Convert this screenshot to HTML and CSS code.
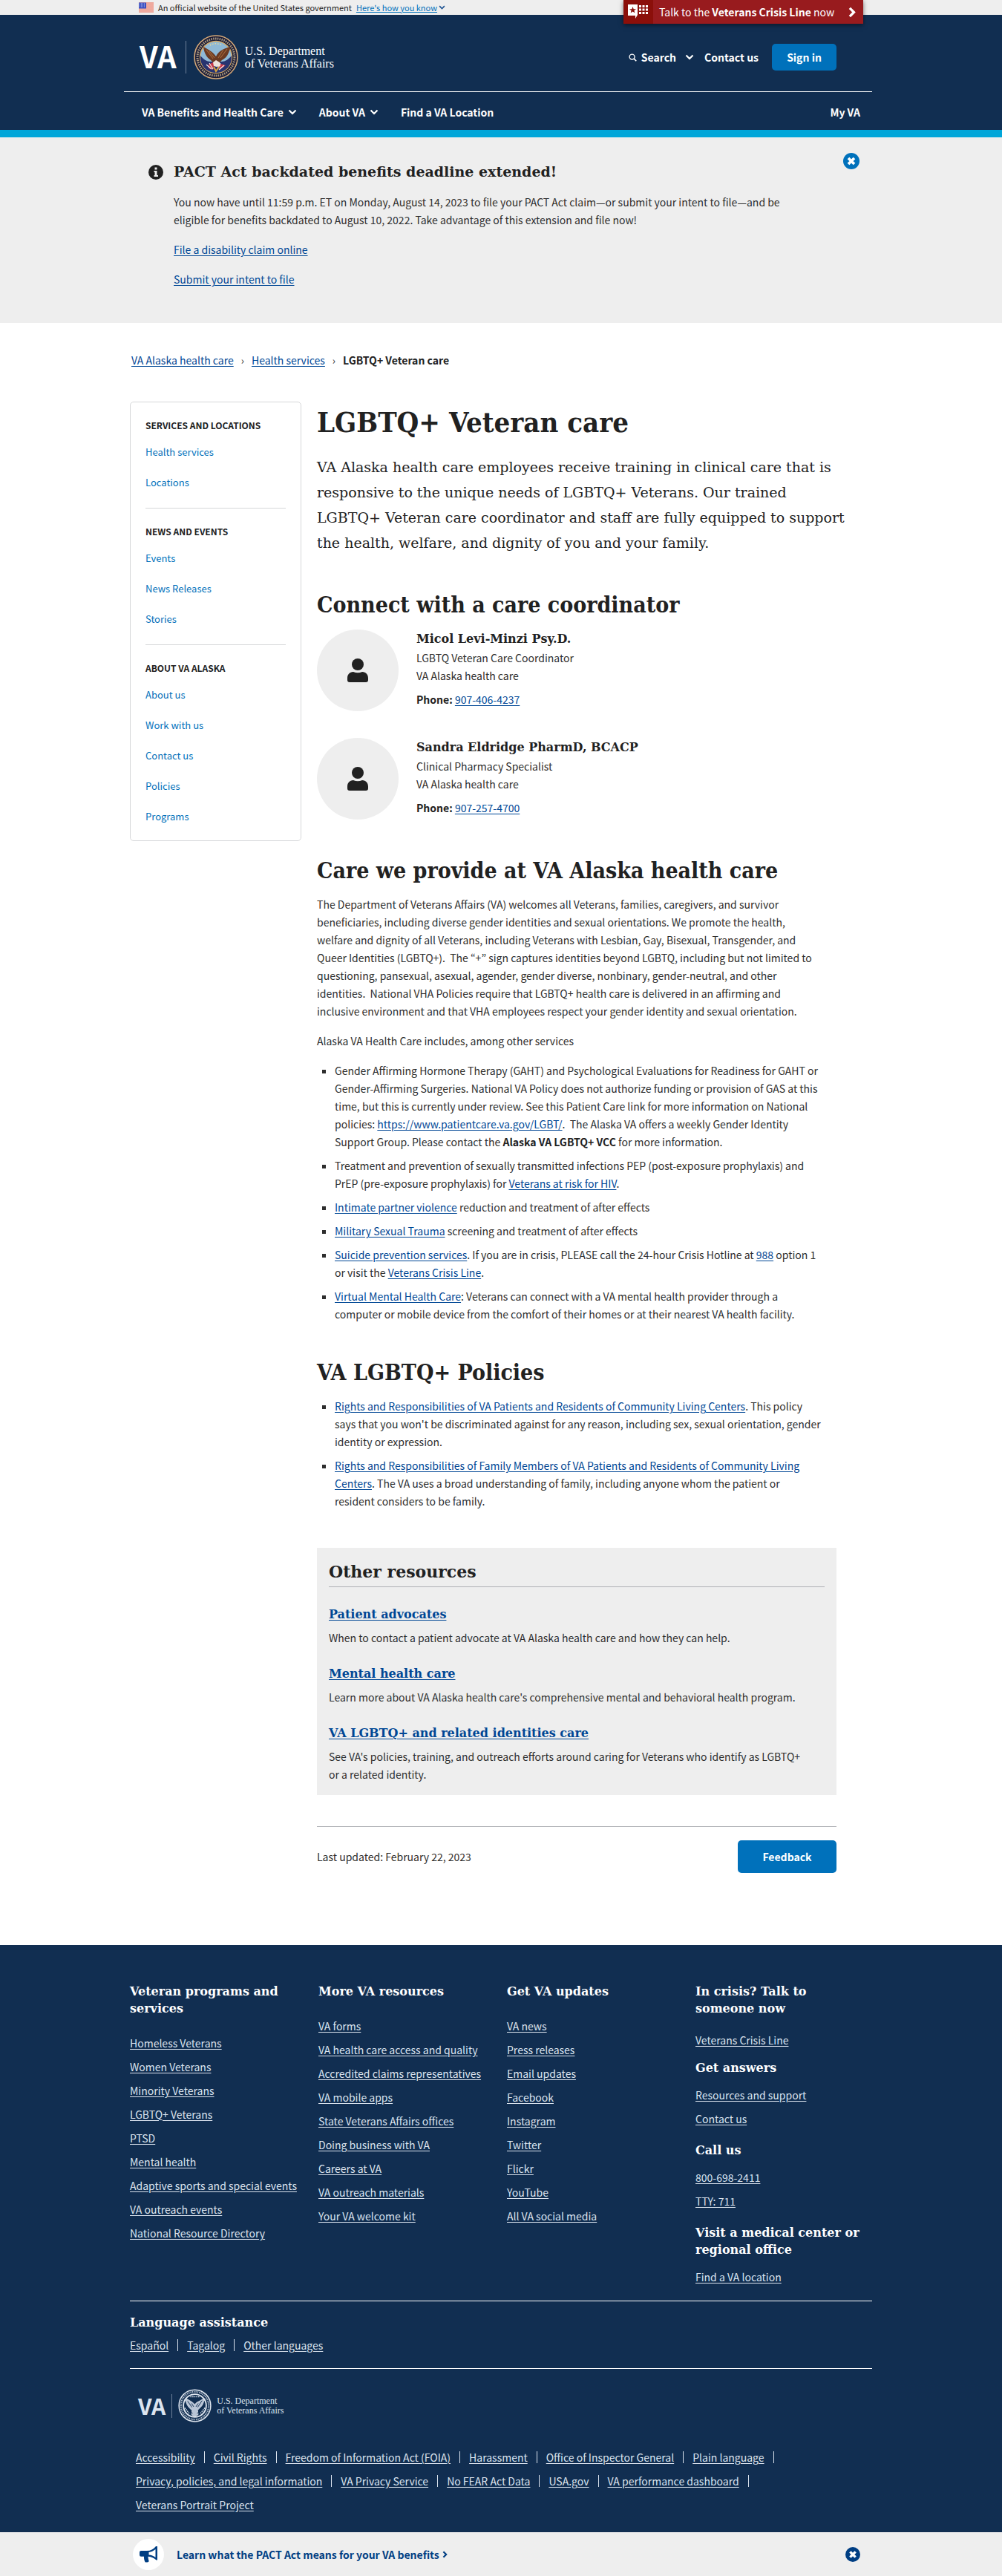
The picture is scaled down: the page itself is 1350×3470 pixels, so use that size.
FILE: index.html
```html
<!DOCTYPE html>
<html lang="en">
<head>
<meta charset="utf-8">
<meta name="viewport" content="width=device-width, initial-scale=1">
<title>LGBTQ+ Veteran care | VA Alaska health care</title>
<link rel="stylesheet" href="styles.css">
</head>
<body>
<svg class="sprite" aria-hidden="true">
  <symbol id="chevron" viewBox="0 0 12 8"><path d="M1.5 1.5 6 6l4.500-4.500" fill="none" stroke="currentColor" stroke-width="2.200"/></symbol>
  <symbol id="chevron-right" viewBox="0 0 8 12"><path d="M1.500 1.500 6 6l-4.500 4.500" fill="none" stroke="currentColor" stroke-width="2.600"/></symbol>
  <symbol id="close" viewBox="0 0 22 22"><circle cx="11" cy="11" r="11" fill="currentColor"/><path d="m7 7 8 8m0-8-8 8" stroke="#fff" stroke-width="3.800"/></symbol>
  <symbol id="person" viewBox="0 0 28 32"><circle cx="14" cy="8" r="8" fill="currentColor"/><path d="M8 18c2 .8 4 1.200 6 1.200s4-.4 6-1.200c5 0 8 3.600 8 8.400V29a3 3 0 0 1-3 3H3a3 3 0 0 1-3-3v-2.600C0 21.600 3 18 8 18z" fill="currentColor"/></symbol>
</svg>

<div class="gov">
  <div class="wrap gov-inner">
    <svg class="flag" viewBox="0 0 20 13" aria-hidden="true"><path fill="#fff" d="M0 0h20v13H0z"/><path stroke="#e0543c" d="M0 .5h20M0 2.500h20M0 4.500h20M0 6.500h20M0 8.500h20M0 10.500h20M0 12.500h20"/><path fill="#3a4ec0" d="M0 0h10v8H0z"/><path stroke="#b9c3f2" stroke-dasharray="1 1" d="M1 1.500h8M1 3.500h8M1 5.500h8"/></svg>
    <span>An official website of the United States government</span>
    <button class="gov-link" type="button"><span>Here's how you know</span><svg class="chev" aria-hidden="true"><use href="#chevron"/></svg></button>
  </div>
  <a class="crisis" href="#">
    <span class="crisis-icon"><svg viewBox="0 0 28 20" aria-hidden="true"><path fill="#fff" d="M0 0h13v14l-3 5v-4H0z"/><path fill="#8b0f0a" d="m6.500 3 1.200 3.200h3.300L8.400 8.200l1 3.300-2.900-2-2.900 2 1-3.300L2 6.200h3.300z"/><path stroke="#fff" stroke-width="3" stroke-dasharray="3 1.500" d="M15 2.500h12.500M15 7h12.500M15 11.500h12.500"/></svg></span>
    <span class="crisis-text">Talk to the <b>Veterans Crisis Line</b> now</span>
    <svg class="crisis-arrow" aria-hidden="true"><use href="#chevron-right"/></svg>
  </a>
</div>

<header class="header">
  <div class="wrap">
    <div class="brand-row">
      <a class="brand" href="#" aria-label="VA home">
        <span class="va">VA</span>
        <svg class="seal" viewBox="0 0 60 60" aria-hidden="true">
          <circle cx="30" cy="30" r="29" fill="#1a1c38" stroke="#d6a978" stroke-width="1.600"/>
          <circle cx="30" cy="30" r="25" fill="none" stroke="#a8987f" stroke-width="3" stroke-dasharray="1.600 1.300"/>
          <circle cx="30" cy="30" r="21.500" fill="#8fb9d6" stroke="#d6a964" stroke-width="1.400"/>
          <path d="M9 28c4 5 9 8 13 8h16c4 0 9-3 13-8 1 13-8 23-21 23S8 41 9 28z" fill="#273470"/>
          <path d="m20 40 8-4-2 11-6-2zM33 38l10 3-8 6z" fill="#c8384a"/>
          <path d="m17 40 7 6M21 38l5 8m10-8-4 8m9-5-7 6" stroke="#f0e8e6" stroke-width="1.200"/>
          <path d="M13 16c4 2 7 4 10 6 3 2 5 4 7 7 2-4 4-6 7-8 3-2 7-4 13-5-1 3-2 5-3 8-2 5-5 8-9 10l-4 4h-7l-4-4c-6-4-9-10-10-18z" fill="#6b3a22"/>
          <path d="m17 20 9 12M21 22l7 9m17-12-9 12m4-11-7 11" stroke="#a4683b" stroke-width="1.200"/>
          <path d="m26 37 4-3 5 3 1 5-5 1-4-1z" fill="#eee3dc"/>
          <path d="m27 43 3 6 4-6" stroke="#dba43d" stroke-width="2" fill="none"/>
          <path d="M22 14c5-3 11-3 16 0" stroke="#e8d99a" stroke-width="1.500" stroke-dasharray="1.500 2" fill="none"/>
        </svg>
        <span class="dept">U.S. Department<br>of Veterans Affairs</span>
      </a>
      <div class="tools">
        <button class="tool search" type="button"><svg class="glass" viewBox="0 0 12 12" aria-hidden="true"><circle cx="5" cy="5" r="3.800" fill="none" stroke="#fff" stroke-width="1.500"/><path d="m7.800 7.800 3.400 3.400" stroke="#fff" stroke-width="1.800"/></svg>Search<svg class="chev chev-search" aria-hidden="true"><use href="#chevron"/></svg></button>
        <a class="tool" href="#">Contact us</a>
        <button class="btn signin" type="button">Sign in</button>
      </div>
    </div>
    <nav class="nav" aria-label="Primary">
      <button class="tool" type="button">VA Benefits and Health Care<svg class="chev" aria-hidden="true"><use href="#chevron"/></svg></button>
      <button class="tool" type="button">About VA<svg class="chev" aria-hidden="true"><use href="#chevron"/></svg></button>
      <a class="tool" href="#">Find a VA Location</a>
      <a class="tool myva" href="#">My VA</a>
    </nav>
  </div>
</header>

<section class="alert">
  <div class="wrap alert-in">
    <svg class="info" viewBox="0 0 20 20" aria-hidden="true"><circle cx="10" cy="10" r="10" fill="#212121"/><path fill="#eee" d="M8.500 3.500h3v3h-3zM7.500 8h4v6H13v2H7.500v-2h1v-4h-1z"/></svg>
    <div class="alert-body">
      <h2>PACT Act backdated benefits deadline extended!</h2>
      <p>You now have until 11:59 p.m. ET on Monday, August 14, 2023 to file your PACT Act claim—or submit your intent to file—and be eligible for benefits backdated to August 10, 2022. Take advantage of this extension and file now!</p>
      <p><a href="#">File a disability claim online</a></p>
      <p><a href="#">Submit your intent to file</a></p>
    </div>
    <button class="close" type="button" aria-label="Close notification"><svg aria-hidden="true"><use href="#close"/></svg></button>
  </div>
</section>

<div class="wrap">
  <nav class="crumbs" aria-label="Breadcrumb">
    <a href="#">VA Alaska health care</a><span class="sep">›</span><a href="#">Health services</a><span class="sep">›</span><b>LGBTQ+ Veteran care</b>
  </nav>
  <div class="layout">
    <nav class="side" aria-label="Section">
      <section><h2>Services and locations</h2><ul><li><a href="#">Health services</a></li><li><a href="#">Locations</a></li></ul></section>
      <section><h2>News and events</h2><ul><li><a href="#">Events</a></li><li><a href="#">News Releases</a></li><li><a href="#">Stories</a></li></ul></section>
      <section><h2>About VA Alaska</h2><ul><li><a href="#">About us</a></li><li><a href="#">Work with us</a></li><li><a href="#">Contact us</a></li><li><a href="#">Policies</a></li><li><a href="#">Programs</a></li></ul></section>
    </nav>
    <main class="article">
      <h1>LGBTQ+ Veteran care</h1>
      <p class="intro">VA Alaska health care employees receive training in clinical care that is responsive to the unique needs of LGBTQ+ Veterans. Our trained<br>LGBTQ+ Veteran care coordinator and staff are fully equipped to support the health, welfare, and dignity of you and your family.</p>

      <h2>Connect with a care coordinator</h2>
      <div class="people">
        <div class="person">
          <span class="avatar"><svg aria-hidden="true"><use href="#person"/></svg></span>
          <div><h3>Micol Levi-Minzi Psy.D.</h3><p>LGBTQ Veteran Care Coordinator</p><p>VA Alaska health care</p><p class="phone"><b>Phone:</b> <a href="#">907-406-4237</a></p></div>
        </div>
        <div class="person">
          <span class="avatar"><svg aria-hidden="true"><use href="#person"/></svg></span>
          <div><h3>Sandra Eldridge PharmD, BCACP</h3><p>Clinical Pharmacy Specialist</p><p>VA Alaska health care</p><p class="phone"><b>Phone:</b> <a href="#">907-257-4700</a></p></div>
        </div>
      </div>

      <h2>Care we provide at VA Alaska health care</h2>
      <div class="copy">
        <p>The Department of Veterans Affairs (VA) welcomes all Veterans, families, caregivers, and survivor beneficiaries, including diverse gender identities and sexual orientations. We promote the health,<br>welfare and dignity of all Veterans, including Veterans with Lesbian, Gay, Bisexual, Transgender, and Queer Identities (LGBTQ+).&nbsp; The “+” sign captures identities beyond LGBTQ, including but not limited to questioning, pansexual, asexual, agender, gender diverse, nonbinary, gender-neutral, and other identities.&nbsp; National VHA Policies require that LGBTQ+ health care is delivered in an affirming and inclusive environment and that VHA employees respect your gender identity and sexual orientation.</p>
        <p>Alaska VA Health Care includes, among other services</p>
        <ul>
          <li>Gender Affirming Hormone Therapy (GAHT) and Psychological Evaluations for Readiness for GAHT or Gender-Affirming Surgeries. National VA Policy does not authorize funding or provision of GAS at this time, but this is currently under review. See this Patient Care link for more information on National policies: <a href="#">https://www.patientcare.va.gov/LGBT/</a>.&nbsp; The Alaska VA offers a weekly Gender Identity Support Group. Please contact the <b>Alaska VA LGBTQ+ VCC</b> for more information.</li>
          <li>Treatment and prevention of sexually transmitted infections PEP (post-exposure prophylaxis) and PrEP (pre-exposure prophylaxis) for <a href="#">Veterans at risk for HIV</a>.</li>
          <li><a href="#">Intimate partner violence</a> reduction and treatment of after effects</li>
          <li><a href="#">Military Sexual Trauma</a> screening and treatment of after effects</li>
          <li><a href="#">Suicide prevention services</a>. If you are in crisis, PLEASE call the 24-hour Crisis Hotline at <a href="#">988</a> option 1 or visit the <a href="#">Veterans Crisis Line</a>.</li>
          <li><a href="#">Virtual Mental Health Care</a>: Veterans can connect with a VA mental health provider through a computer or mobile device from the comfort of their homes or at their nearest VA health facility.</li>
        </ul>
      </div>

      <h2>VA LGBTQ+ Policies</h2>
      <div class="copy">
        <ul>
          <li><a href="#">Rights and Responsibilities of VA Patients and Residents of Community Living Centers</a>. This policy<br>says that you won't be discriminated against for any reason, including sex, sexual orientation, gender identity or expression.</li>
          <li><a href="#">Rights and Responsibilities of Family Members of VA Patients and Residents of Community Living Centers</a>. The VA uses a broad understanding of family, including anyone whom the patient or<br>resident considers to be family.</li>
        </ul>
      </div>

      <section class="resources">
        <h2>Other resources</h2>
        <h3><a href="#">Patient advocates</a></h3>
        <p>When to contact a patient advocate at VA Alaska health care and how they can help.</p>
        <h3><a href="#">Mental health care</a></h3>
        <p>Learn more about VA Alaska health care's comprehensive mental and behavioral health program.</p>
        <h3><a href="#">VA LGBTQ+ and related identities care</a></h3>
        <p>See VA's policies, training, and outreach efforts around caring for Veterans who identify as LGBTQ+ or a related identity.</p>
      </section>

      <div class="updated">
        <span>Last updated: February 22, 2023</span>
        <button class="btn feedback" type="button">Feedback</button>
      </div>
    </main>
  </div>
</div>

<footer class="footer">
  <div class="wrap">
    <div class="cols">
      <section><h2>Veteran programs and services</h2><ul><li><a href="#">Homeless Veterans</a></li><li><a href="#">Women Veterans</a></li><li><a href="#">Minority Veterans</a></li><li><a href="#">LGBTQ+ Veterans</a></li><li><a href="#">PTSD</a></li><li><a href="#">Mental health</a></li><li><a href="#">Adaptive sports and special events</a></li><li><a href="#">VA outreach events</a></li><li><a href="#">National Resource Directory</a></li></ul></section>
      <section><h2>More VA resources</h2><ul><li><a href="#">VA forms</a></li><li><a href="#">VA health care access and quality</a></li><li><a href="#">Accredited claims representatives</a></li><li><a href="#">VA mobile apps</a></li><li><a href="#">State Veterans Affairs offices</a></li><li><a href="#">Doing business with VA</a></li><li><a href="#">Careers at VA</a></li><li><a href="#">VA outreach materials</a></li><li><a href="#">Your VA welcome kit</a></li></ul></section>
      <section><h2>Get VA updates</h2><ul><li><a href="#">VA news</a></li><li><a href="#">Press releases</a></li><li><a href="#">Email updates</a></li><li><a href="#">Facebook</a></li><li><a href="#">Instagram</a></li><li><a href="#">Twitter</a></li><li><a href="#">Flickr</a></li><li><a href="#">YouTube</a></li><li><a href="#">All VA social media</a></li></ul></section>
      <section class="contact">
        <div class="contact-first"><h2>In crisis? Talk to someone now</h2><ul><li><a href="#">Veterans Crisis Line</a></li></ul></div>
        <h2>Get answers</h2><ul><li><a href="#">Resources and support</a></li><li><a href="#">Contact us</a></li></ul>
        <h2>Call us</h2><ul><li><a href="#">800-698-2411</a></li><li><a href="#">TTY: 711</a></li></ul>
        <h2>Visit a medical center or regional office</h2><ul><li><a href="#">Find a VA location</a></li></ul>
      </section>
    </div>
    <section class="language">
      <h2>Language assistance</h2>
      <ul class="bar"><li><a href="#">Español</a></li><li><a href="#">Tagalog</a></li><li><a href="#">Other languages</a></li></ul>
    </section>
    <a class="brand brand-small" href="#" aria-label="VA home">
      <span class="va">VA</span>
      <svg class="seal" viewBox="0 0 60 60" fill="none" stroke="#dfe6ef" aria-hidden="true">
        <circle cx="30" cy="30" r="28.500" stroke-width="2"/>
        <circle cx="30" cy="30" r="25" stroke-width="3" stroke-dasharray="1.800 1.400" opacity=".75"/>
        <circle cx="30" cy="30" r="20.500" stroke-width="2.500"/>
        <path d="M13 17c5 2 8 4 11 6 3 2 4 3 6 5 2-3 4-4 6-5 4-2 7-4 11-6-1 9-4 14-9 18l-3 3 1 8-6 4-6-4 1-8c-7-4-11-12-12-21z" fill="#b9c5d6"/>
        <path d="m17 22 8 11m18-12-8 12M18 38l8 6m16-6-8 6M24 26l4 6m8-6-4 6" stroke="#112e51" stroke-width="1.300"/>
        <path d="M22 14h16M12 34l8 10M48 34l-8 10" stroke-dasharray="2 1.500" stroke-width="2"/>
      </svg>
      <span class="dept">U.S. Department<br>of Veterans Affairs</span>
    </a>
    <ul class="bar legal"><li><a href="#">Accessibility</a></li><li><a href="#">Civil Rights</a></li><li><a href="#">Freedom of Information Act (FOIA)</a></li><li><a href="#">Harassment</a></li><li><a href="#">Office of Inspector General</a></li><li><a href="#">Plain language</a></li><li><a href="#">Privacy, policies, and legal information</a></li><li><a href="#">VA Privacy Service</a></li><li><a href="#">No FEAR Act Data</a></li><li><a href="#">USA.gov</a></li><li><a href="#">VA performance dashboard</a></li><li><a href="#">Veterans Portrait Project</a></li></ul>
  </div>
</footer>

<aside class="promo">
  <div class="wrap promo-in">
    <span class="horn"><svg viewBox="0 0 24 22" aria-hidden="true"><path fill="#003e83" fill-rule="evenodd" d="M24 0v18.500h-1.500C19 15.500 16 14 11.500 13.700c.2 3 .5 4.500 1.200 6.300-1 1.700-3.500 2-5.200 1.200-1.300-3-1.700-5-1.500-7.500H2a2 2 0 0 1-2-2V8a2 2 0 0 1 2-2h8c5 0 8.500-2 12-6zm-2.500 4C18.500 6.500 16 7.600 12.500 8v3.500c3.500.3 6 1.300 9 3.500z"/></svg></span>
    <a href="#">Learn what the PACT Act means for your VA benefits <svg class="promo-arrow" aria-hidden="true"><use href="#chevron-right"/></svg></a>
    <button class="close" type="button" aria-label="Close promo"><svg aria-hidden="true"><use href="#close"/></svg></button>
  </div>
</aside>
</body>
</html>
```
FILE: styles.css
```css
:root {
  --sans: "Noto Sans CJK KR", "Noto Sans", sans-serif;
  --slab: "DejaVu Serif", serif;
  --slab-narrow: "DejaVu Serif Condensed", "DejaVu Serif", serif;
  --navy: #112e51;
  --blue: #0071bb;
  --link: #004795;
  --ink: #212121;
  --gray: #eee;
}

* { box-sizing: border-box; }

body {
  margin: 0;
  font: 14px/24px var(--sans);
  color: #2e2e2e;
  background: #fff;
}

h1, h2, h3, p, ul { margin: 0; }
h1, h2, h3 { font-family: var(--slab); font-weight: 700; color: var(--ink); }
ul { padding: 0; list-style: none; }
a { color: var(--link); text-underline-offset: 2px; }
b { color: var(--ink); }
svg { display: block; flex: none; }
button { font: inherit; padding: 0; border: 0; background: none; cursor: pointer; }
.sprite { position: absolute; width: 0; height: 0; }
.wrap { max-width: 1000px; margin: 0 auto; }
.chev { width: 12px; height: 8px; }

.btn {
  border-radius: 5px;
  background: var(--blue);
  color: #fff;
  font-weight: 700;
}

/* Government banner and crisis line tab */
.gov { position: relative; background: var(--gray); font-size: 11px; line-height: 20px; }
.gov-inner { display: flex; align-items: center; gap: 6px; padding-left: 12px; }
.gov-inner > span { color: var(--ink); }
.flag { width: 20px; height: 14px; }
.gov-link { display: flex; align-items: center; gap: 2px; color: var(--blue); }
.gov-link span { text-decoration: underline; }
.gov-link .chev { width: 9px; height: 6px; color: #205493; }

.crisis {
  position: absolute;
  z-index: 1;
  top: 0;
  left: calc(50% + 165px);
  display: flex;
  align-items: center;
  width: 323px;
  height: 32px;
  background: #981b1e;
  box-shadow: 0 2px 6px rgba(0, 0, 0, .5);
  color: #fff;
  font-size: 14px;
  text-decoration: none;
}
.crisis b { color: #fff; }
.crisis-icon { display: grid; place-items: center; width: 40px; height: 32px; background: #8b0f0a; }
.crisis-icon svg { width: 28px; height: 20px; }
.crisis-text { padding-left: 8px; }
.crisis-arrow { width: 10px; height: 15px; margin: 0 10px 0 auto; }

/* Header */
.header { background: var(--navy); border-bottom: 10px solid #00a6d9; color: #fff; }
.brand-row {
  display: flex;
  align-items: center;
  justify-content: space-between;
  height: 104px;
  margin-left: -8px;
  padding: 11px 48px 0 21px;
  border-bottom: 1px solid #fff;
}
.brand { display: flex; align-items: center; color: #fff; text-decoration: none; }
.va {
  padding: 0 12px 4px 0;
  border-right: 1px solid #6f8199;
  font-size: 40px;
  line-height: 40px;
  font-weight: 700;
}
.seal { width: 60px; height: 60px; margin: 0 9px 0 10px; }
.dept { font: 16px/17px "Liberation Serif", serif; }
.tools { display: flex; align-items: center; }
.tool {
  display: flex;
  align-items: center;
  gap: 6px;
  color: #fff;
  font-weight: 700;
  text-decoration: none;
}
.glass { width: 11px; height: 11px; }
.chev-search { margin: 0 14px 0 6px; }
.signin { width: 87px; height: 36px; margin-left: 18px; }
.nav { display: flex; gap: 30px; padding: 15px 16px 12px; }
.nav .myva { margin-left: auto; }

/* Site-wide notice */
.alert { background: var(--gray); }
.alert-in { display: flex; padding: 32px 17px 46px 25px; }
.info { width: 20px; height: 20px; margin: 5px 14px 0 0; }
.alert-body { flex: 1; max-width: 850px; }
.alert h2 { font-size: 19px; line-height: 28px; }
.alert p { margin-top: 15px; padding-bottom: 1px; }
.alert .close { align-self: flex-start; margin: -11px 0 0 auto; }
.close svg { width: 22px; height: 22px; }
.close { color: var(--blue); }

.crumbs { display: flex; padding: 38px 2px 44px; }
.sep { padding: 0 10px; }

.layout { display: grid; grid-template-columns: 231px minmax(0, 700px); column-gap: 21px; align-items: start; }

/* Section navigation */
.side { padding: 0 20px; border: 1px solid #d6d7d9; border-radius: 5px; font-size: 13px; }
.side section { padding: 19px 0 22px; }
.side section:last-child { padding-bottom: 20px; }
.side section + section { border-top: 1px solid #d6d7d9; }
.side h2 { font: 700 12px/24px var(--sans); text-transform: uppercase; }
.side ul { display: grid; gap: 17px; margin-top: 12px; }
.side a { color: var(--blue); text-decoration: none; }

/* Article */
.article { padding-bottom: 97px; }
h1 { padding-top: 3px; font: 700 38px/50px var(--slab-narrow); }
.intro { margin: 18px -16px 0 0; font: 19px/34px var(--slab); color: var(--ink); }
.article h2 { margin: 47px 0 13px; font: 700 30px/40px var(--slab-narrow); }
.people { display: grid; gap: 36px; padding-bottom: 2px; }
.person { display: flex; gap: 24px; }
.person h3 { font-size: 16px; line-height: 26px; }
.phone { margin-top: 8px; }
.avatar { display: grid; place-items: center; width: 110px; height: 110px; border-radius: 50%; background: var(--gray); color: var(--ink); }
.avatar svg { width: 28px; height: 32px; }

.copy { padding-right: 16px; }
.copy p { margin-bottom: 16px; }
.copy ul { padding-left: 24px; list-style: square; }
.copy li + li { margin-top: 8px; }
.article .copy + .resources { margin-top: 51px; }

.resources { padding: 16px; background: var(--gray); }
.article .resources h2 { margin: 0; padding-bottom: 4px; border-bottom: 1px solid #aeb0b5; font: 700 22px/32px var(--slab); }
.resources h3 { margin: 24px 0 6px; font-size: 16px; line-height: 26px; }
.resources p { padding-right: 16px; }

.updated {
  display: flex;
  align-items: center;
  justify-content: space-between;
  margin-top: 42px;
  padding-top: 18px;
  border-top: 1px solid #aeb0b5;
}
.feedback { width: 133px; height: 44px; }

/* Footer */
.footer { padding: 51px 0 25px; background: var(--navy); color: #dfe6ef; }
.footer h2 { color: #fff; font-size: 16px; line-height: 23px; }
.footer a { color: #dce4ef; }
.cols { display: grid; grid-template-columns: repeat(4, 1fr); gap: 16px; padding-bottom: 20px; }
.cols ul { display: grid; gap: 8px; margin-top: 23px; }
.contact ul { margin: 13px 0 19px; }
.contact ul:last-child { margin-bottom: 0; }
.contact .contact-first { padding-right: 16px; }
.contact .contact-first ul { margin: 19px 0 14px; }
.language { padding: 17px 0 19px; border: solid #fff; border-width: 1px 0; }
.bar { display: flex; flex-wrap: wrap; }
.bar li { display: flex; align-items: center; }
.bar li:not(:last-child)::after { content: ""; height: 16px; margin: 0 12px; border-left: 1px solid #dce4ef; }
.language .bar { margin-top: 7px; }
.brand-small { padding: 27px 11px 35px; }
.brand-small .va { padding: 0 8px 2px 0; font-size: 30px; line-height: 30px; }
.brand-small .seal { width: 45px; height: 45px; margin: 0 7px 0 8px; }
.brand-small .dept { font-size: 12px; line-height: 13px; }
.legal { row-gap: 8px; padding: 0 60px 0 8px; }

/* Bottom promotion */
.promo { background: var(--gray); }
.promo-in { display: flex; align-items: center; height: 59px; padding: 0 16px 0 4px; }
.horn { display: grid; place-items: center; width: 42px; height: 42px; border-radius: 50%; background: #fff; }
.horn svg { width: 24px; height: 22px; }
.promo a { display: flex; align-items: center; gap: 4px; margin-left: 17px; color: #003e83; font-weight: 700; text-decoration: none; }
.promo-arrow { width: 7px; height: 10px; }
.promo .close { margin-left: auto; color: #003e83; }
.promo .close svg { width: 20px; height: 20px; }
```
